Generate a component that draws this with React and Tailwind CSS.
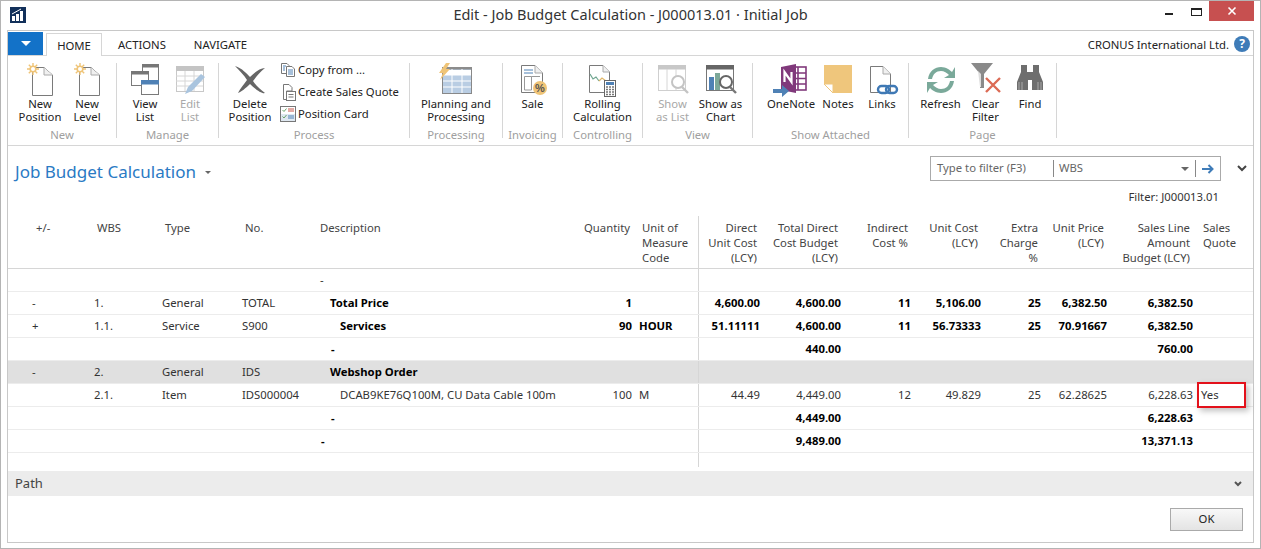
import React from "react";

const gray = "#7a7a7a";

const Doc = ({ children }) => (
  <svg width="34" height="34" viewBox="0 0 34 34" fill="none">
    <path d="M9.5 4.5H21L29.5 12V32.5H9.5Z" fill="#fff" stroke={gray} />
    <path d="M21 4.5V12H29.5" fill="#f0f0f0" stroke="#aaa" />
    {children}
  </svg>
);

const NewIcon = () => (
  <Doc>
    <path d="M10 0V12M4 6H16M5.8 1.8L14.2 10.2M14.2 1.8L5.8 10.2" stroke="#efc477" strokeWidth="1.4" />
    <circle cx="10" cy="6" r="3.6" fill="#efc477" />
    <circle cx="10" cy="6" r="2" fill="#fff" />
  </Doc>
);

const ViewListIcon = () => (
  <svg width="34" height="34" viewBox="0 0 34 34" fill="none">
    <rect x="14.5" y="1.5" width="16" height="16" fill="#fff" stroke={gray} />
    <rect x="14" y="1" width="17" height="3.5" fill="#777" />
    <rect x="3.5" y="8.5" width="17" height="14" fill="#fff" stroke={gray} />
    <rect x="3" y="8" width="18" height="3.5" fill="#777" />
    <rect x="13.5" y="17.5" width="17" height="14" fill="#fff" stroke={gray} />
    <rect x="13" y="17" width="18" height="4.5" fill="#4f81b5" />
  </svg>
);

const EditListIcon = () => (
  <svg width="34" height="34" viewBox="0 0 34 34" fill="none">
    <rect x="3.5" y="3.5" width="27" height="25" fill="#fff" stroke="#c8c8c8" />
    <rect x="3" y="3" width="28" height="5" fill="#c4c4c4" />
    <path d="M3 13H30M3 18H30M3 23H30M12 8V28M21 8V28" stroke="#d6d6d6" />
    <path d="M12 31L15 24L28 11L32 14L19 28Z" fill="#a9c4de" />
  </svg>
);

const DeleteIcon = () => (
  <svg width="36" height="34" viewBox="0 0 36 34" fill="none">
    <path d="M3 3C10 5 15 11 18 14C23 9 28 5 33 5C28 9 24 14 21 18C24 23 29 27 33 30C30 31 23 26 18 21C14 25 9 29 6 30C8 26 12 21 15 17C12 12 7 7 3 3Z" fill="#666" />
  </svg>
);

const SmallDocs = () => (
  <svg width="16" height="16" viewBox="0 0 16 16" fill="none">
    <path d="M1.5 1.5H7L9 3.5V11.5H1.5Z" fill="#fff" stroke="#777" />
    <path d="M6.5 4.5H12L14.5 7V14.5H6.5Z" fill="#fff" stroke="#777" />
    <path d="M3 4H6M3 6H5M3 8H5" stroke="#4f81b5" />
    <path d="M8 8H13M8 10H13M8 12H13" stroke="#4f81b5" />
  </svg>
);

const SmallQuote = () => (
  <svg width="16" height="17" viewBox="0 0 16 17" fill="none">
    <path d="M3.5 .5H9L12 3.5V7H6.5V15.5H3.5Z" fill="#fff" stroke="#777" />
    <rect x="6.5" y="7.5" width="9" height="9" fill="#fff" stroke="#777" />
    <path d="M8.5 10.5H13.5M8.5 13H13.5" stroke="#777" />
  </svg>
);

const SmallCard = () => (
  <svg width="16" height="16" viewBox="0 0 16 16" fill="none">
    <rect x=".5" y=".5" width="15" height="15" fill="#fff" stroke="#777" />
    <rect x="1" y="8" width="14" height="7" fill="#dfe8f1" />
    <path d="M2.5 4L4 5.5L6.5 2.5M2.5 10.5L4 12L6.5 9" stroke="#6aa56a" />
    <path d="M8 3H14M8 5H14" stroke="#c9574a" />
    <path d="M8 10H14M8 12H14" stroke="#4f81b5" />
  </svg>
);

const PlanningIcon = () => (
  <svg width="34" height="34" viewBox="0 0 34 34" fill="none">
    <rect x="3.5" y="4.5" width="29" height="26" fill="#b9cde3" stroke="#888" />
    <rect x="4" y="7" width="28" height="5" fill="#fff" />
    <rect x="3" y="4" width="30" height="2.5" fill="#8c8c8c" />
    <path d="M4 12H32M4 18H32M4 24H32M13 6V30M23 6V30" stroke="#fff" />
    <path d="M7 0L0 10H4L1 17L11 6H7L11 0Z" fill="#efc477" />
  </svg>
);

const SaleIcon = () => (
  <svg width="34" height="34" viewBox="0 0 34 34" fill="none">
    <path d="M5.5 2.5H19L26.5 10V29.5H5.5Z" fill="#fff" stroke={gray} />
    <path d="M19 2.5V10H26.5" fill="#f0f0f0" stroke="#aaa" />
    <path d="M8 7H17M8 10H17" stroke="#4f81b5" />
    <path d="M8.5 13.5H15.5V27H8.5Z" stroke="#999" />
    <path d="M15.5 13.5H24" stroke="#999" />
    <circle cx="24" cy="25" r="7" fill="#efc477" />
    <text x="24" y="29" textAnchor="middle" fontSize="11" fontWeight="700" fill="#555" fontFamily="Liberation Sans, sans-serif">%</text>
  </svg>
);

const RollingIcon = () => (
  <svg width="36" height="34" viewBox="0 0 36 34" fill="none">
    <path d="M4.5 2.5H18L24.5 9V29.5H4.5Z" fill="#fff" stroke={gray} />
    <path d="M18 2.5V9H24.5" fill="#f0f0f0" stroke="#aaa" />
    <path d="M5 11L8 16L11 14L14 18" stroke="#6ea58f" strokeWidth="1.2" />
    <path d="M14 18L17 15L21 18" stroke="#e0b768" strokeWidth="1.2" />
    <rect x="19.5" y="17.5" width="11" height="16" fill="#fff" stroke="#666" />
    <rect x="21" y="19" width="8" height="3" fill="#4f81b5" />
    <path d="M21 24H29M21 26.5H29M21 29H29M21 31.5H29" stroke="#777" strokeDasharray="2 1" strokeWidth="1.4" />
  </svg>
);

const ShowListIcon = () => (
  <svg width="34" height="34" viewBox="0 0 34 34" fill="none">
    <rect x="2.5" y="2.5" width="27" height="25" fill="#fff" stroke="#cfcfcf" />
    <rect x="2" y="2" width="28" height="4.5" fill="#c8c8c8" />
    <path d="M11 6V27M20 6V27" stroke="#d6d6d6" />
    <circle cx="22" cy="19" r="6" fill="#fff" stroke="#c4c4c4" strokeWidth="2" />
    <path d="M26 24L32 30" stroke="#c4c4c4" strokeWidth="2.4" />
  </svg>
);

const ShowChartIcon = () => (
  <svg width="34" height="34" viewBox="0 0 34 34" fill="none">
    <rect x="2.5" y="2.5" width="27" height="25" fill="#fff" stroke="#777" />
    <rect x="2" y="2" width="28" height="4.5" fill="#666" />
    <rect x="5" y="14" width="5" height="13" fill="#4f81b5" />
    <rect x="11" y="10" width="5" height="17" fill="#7da899" />
    <circle cx="22" cy="19" r="6" fill="#fff" stroke="#666" strokeWidth="2" />
    <path d="M26 24L32 30" stroke="#777" strokeWidth="2.4" />
  </svg>
);

const OneNoteIcon = () => (
  <svg width="36" height="34" viewBox="0 0 36 34" fill="none">
    <rect x="21" y="4" width="12" height="23" fill="#fff" stroke="#80397b" strokeWidth="1.6" />
    <path d="M25 4V27M21 10H33M21 15.5H33M21 21H33" stroke="#80397b" strokeWidth="1.6" />
    <path d="M8 4L23 1V30L8 27Z" fill="#80397b" />
    <path d="M11.5 19V9L18.5 19V9" stroke="#fff" strokeWidth="2.2" />
    <path d="M0 26H9V22L16 28L9 34V30H0Z" fill="#4f81b5" />
  </svg>
);

const NotesIcon = () => (
  <svg width="34" height="34" viewBox="0 0 34 34" fill="none">
    <path d="M3 2H31V30H12L3 21Z" fill="#efc67c" />
    <path d="M3 21H12V30Z" fill="#fff" stroke="#efc67c" />
  </svg>
);

const LinksIcon = () => (
  <svg width="34" height="34" viewBox="0 0 34 34" fill="none">
    <path d="M5.5 3.5H18L25.5 11V29.5H5.5Z" fill="#fff" stroke={gray} />
    <path d="M18 3.5V11H25.5" fill="#f0f0f0" stroke="#aaa" />
    <rect x="13" y="23" width="11" height="7" rx="3.5" fill="#fff" stroke="#3f79b5" strokeWidth="2.4" />
    <rect x="21" y="23" width="11" height="7" rx="3.5" fill="none" stroke="#3f79b5" strokeWidth="2.4" />
  </svg>
);

const RefreshIcon = () => (
  <svg width="34" height="34" viewBox="0 0 34 34" fill="none">
    <path d="M4 16C5 8 11 4 17 4C22 4 26 7 28 9L31 4V15H20L25 12C23 10 20 8 17 8C12 8 9 11 8 16Z" fill="#7aa99a" />
    <path d="M30 18C29 26 23 30 17 30C12 30 8 27 6 25L3 30V19H14L9 22C11 24 14 26 17 26C22 26 25 23 26 18Z" fill="#7aa99a" />
  </svg>
);

const ClearFilterIcon = () => (
  <svg width="34" height="34" viewBox="0 0 34 34" fill="none">
    <path d="M2 0H24L15 11V25H11V11Z" fill="#8a8a8a" />
    <path d="M9 8L12 11V24H11Z" fill="#ddd" />
    <path d="M17 15L31 29M31 15L17 29" stroke="#dc6b55" strokeWidth="2.4" />
  </svg>
);

const FindIcon = () => (
  <svg width="34" height="34" viewBox="0 0 34 34" fill="none">
    <path d="M8 2H14V9H20V2H26V9L30 19V27H19V17H15V27H4V19L8 9Z" fill="#6e6e6e" />
    <path d="M6 19V27M9 19V27M25 19V27M28 19V27" stroke="#aaa" />
  </svg>
);

const BigButton = ({ icon, lines, width, disabled }) => (
  <div className={`flex flex-col items-center ${width}`}>
    <div className="flex h-[34px] w-full items-center justify-center">{icon}</div>
    <div className={`whitespace-nowrap text-center leading-[13px] ${disabled ? "text-[#a8a8a8]" : "text-[#222]"}`}>
      {lines.map((l) => (
        <div key={l}>{l}</div>
      ))}
    </div>
  </div>
);

const Group = ({ label, width, inner = "", children }) => (
  <div className={`flex h-[75px] shrink-0 flex-col border-r border-[#d6d6d6] ${width}`}>
    <div className={`flex flex-1 justify-center ${inner}`}>{children}</div>
    <div className="-mb-[3px] whitespace-nowrap text-center leading-[13px] text-[#a0a0a0]">{label}</div>
  </div>
);

const Ribbon = () => (
  <div className="flex h-[91px] items-start border-y border-[#d6d6d6] pt-[7px]">
    <Group label="New" width="w-[109px]" inner="pl-[2px]">
      <BigButton icon={<NewIcon />} lines={["New", "Position"]} width="w-[48px]" />
      <BigButton icon={<NewIcon />} lines={["New", "Level"]} width="w-[46px]" />
    </Group>
    <Group label="Manage" width="w-[102px]">
      <BigButton icon={<ViewListIcon />} lines={["View", "List"]} width="w-[45px]" />
      <BigButton icon={<EditListIcon />} lines={["Edit", "List"]} width="w-[45px]" disabled />
    </Group>
    <Group label="Process" width="w-[191px]" inner="pr-[4px]">
      <BigButton icon={<DeleteIcon />} lines={["Delete", "Position"]} width="w-[56px]" />
      <div className="-mt-[2px] ml-[2px] flex w-[122px] flex-col gap-[4px] text-[#222]">
        <div className="flex h-[18px] items-center gap-[2px]"><SmallDocs />Copy from ...</div>
        <div className="flex h-[18px] items-center gap-[2px]"><SmallQuote />Create Sales Quote</div>
        <div className="flex h-[18px] items-center gap-[2px]"><SmallCard />Position Card</div>
      </div>
    </Group>
    <Group label="Processing" width="w-[93px]">
      <BigButton icon={<PlanningIcon />} lines={["Planning and", "Processing"]} width="w-[80px]" />
    </Group>
    <Group label="Invoicing" width="w-[60px]">
      <BigButton icon={<SaleIcon />} lines={["Sale"]} width="w-[50px]" />
    </Group>
    <Group label="Controlling" width="w-[80px]">
      <BigButton icon={<RollingIcon />} lines={["Rolling", "Calculation"]} width="w-[70px]" />
    </Group>
    <Group label="View" width="w-[110px]" inner="pr-[2px]">
      <BigButton icon={<ShowListIcon />} lines={["Show", "as List"]} width="w-[48px]" disabled />
      <BigButton icon={<ShowChartIcon />} lines={["Show as", "Chart"]} width="w-[48px]" />
    </Group>
    <Group label="Show Attached" width="w-[156px]" inner="pl-[9px]">
      <BigButton icon={<OneNoteIcon />} lines={["OneNote"]} width="w-[50px]" />
      <BigButton icon={<NotesIcon />} lines={["Notes"]} width="w-[44px]" />
      <BigButton icon={<LinksIcon />} lines={["Links"]} width="w-[44px]" />
    </Group>
    <Group label="Page" width="w-[148px]" inner="pl-[5px]">
      <BigButton icon={<RefreshIcon />} lines={["Refresh"]} width="w-[46px]" />
      <BigButton icon={<ClearFilterIcon />} lines={["Clear", "Filter"]} width="w-[44px]" />
      <BigButton icon={<FindIcon />} lines={["Find"]} width="w-[45px]" />
    </Group>
  </div>
);

const cols =
  "grid grid-cols-[83px_68px_80px_78px_258px_60px_63px_65px_81px_70px_70px_60px_66px_86px_57px]";

const Header = () => (
  <div className={`${cols} h-[53px] border-b border-[#d6d6d6] pt-[4px] leading-[15px] text-[#444]`}>
    <div className="pl-[28px]">+/-</div>
    <div className="pl-[6px]">WBS</div>
    <div className="pl-[6px]">Type</div>
    <div className="pl-[6px]">No.</div>
    <div className="pl-[3px]">Description</div>
    <div className="pr-[5px] text-right">Quantity</div>
    <div className="pl-[7px]">Unit of<br />Measure<br />Code</div>
    <div className="-mt-[4px] border-l border-[#d6d6d6] pr-[6px] pt-[4px] text-right">Direct<br />Unit Cost<br />(LCY)</div>
    <div className="pr-[6px] text-right">Total Direct<br />Cost Budget<br />(LCY)</div>
    <div className="pr-[6px] text-right">Indirect<br />Cost %</div>
    <div className="pr-[6px] text-right">Unit Cost<br />(LCY)</div>
    <div className="pr-[6px] text-right">Extra<br />Charge<br />%</div>
    <div className="pr-[6px] text-right">Unit Price<br />(LCY)</div>
    <div className="pr-[6px] text-right">Sales Line<br />Amount<br />Budget (LCY)</div>
    <div className="pl-[7px]">Sales<br />Quote</div>
  </div>
);

const rows = [
  { desc: "-" },
  { bold: true, pm: "-", wbs: "1.", type: "General", no: "TOTAL", desc: "Total Price", indent: "pl-[13px]", qty: "1", duc: "4,600.00", tdc: "4,600.00", ind: "11", uc: "5,106.00", ec: "25", up: "6,382.50", sl: "6,382.50" },
  { bold: true, pm: "+", wbs: "1.1.", type: "Service", no: "S900", desc: "Services", indent: "pl-[23px]", qty: "90", uom: "HOUR", duc: "51.11111", tdc: "4,600.00", ind: "11", uc: "56.73333", ec: "25", up: "70.91667", sl: "6,382.50" },
  { bold: true, desc: "-", indent: "pl-[14px]", tdc: "440.00", sl: "760.00" },
  { bold: true, shaded: true, pm: "-", wbs: "2.", type: "General", no: "IDS", desc: "Webshop Order", indent: "pl-[13px]" },
  { wbs: "2.1.", type: "Item", no: "IDS000004", desc: "DCAB9KE76Q100M, CU Data Cable 100m", indent: "pl-[23px]", qty: "100", uom: "M", duc: "44.49", tdc: "4,449.00", ind: "12", uc: "49.829", ec: "25", up: "62.28625", sl: "6,228.63", sq: "Yes" },
  { bold: true, desc: "-", indent: "pl-[14px]", tdc: "4,449.00", sl: "6,228.63" },
  { bold: true, desc: "-", indent: "pl-[4px]", tdc: "9,489.00", sl: "13,371.13" },
];

const Row = ({ r }) => {
  const strong = r.bold ? "font-bold text-black" : "text-[#333]";
  const plain = "text-[#333]";
  return (
    <div className={`${cols} h-[23px] items-stretch border-b border-[#ececec] leading-[21px] ${r.shaded ? "bg-[#e0e0e0]" : ""}`}>
      <div className={`pl-[24px] ${plain}`}>{r.pm}</div>
      <div className={`pl-[3px] ${plain}`}>{r.wbs}</div>
      <div className={`pl-[3px] ${plain}`}>{r.type}</div>
      <div className={`pl-[3px] ${plain}`}>{r.no}</div>
      <div className={`whitespace-nowrap ${r.indent || "pl-[3px]"} ${strong}`}>{r.desc}</div>
      <div className={`pr-[3px] text-right ${strong}`}>{r.qty}</div>
      <div className={`pl-[4px] ${strong}`}>{r.uom}</div>
      <div className={`border-l border-[#d6d6d6] pr-[3px] text-right ${strong}`}>{r.duc}</div>
      <div className={`pr-[3px] text-right ${strong}`}>{r.tdc}</div>
      <div className={`pr-[3px] text-right ${strong}`}>{r.ind}</div>
      <div className={`pr-[3px] text-right ${strong}`}>{r.uc}</div>
      <div className={`pr-[3px] text-right ${strong}`}>{r.ec}</div>
      <div className={`pr-[3px] text-right ${strong}`}>{r.up}</div>
      <div className={`pr-[3px] text-right ${strong}`}>{r.sl}</div>
      <div className={`pl-[5px] ${plain}`}>{r.sq}</div>
    </div>
  );
};

export default function App() {
  return (
    <div
      className="relative flex h-[549px] w-[1261px] flex-col overflow-hidden border border-[#b4b4b4] bg-white text-[11.3px]"
      style={{ fontFamily: '"Noto Sans", sans-serif' }}
    >
      <div className="grid h-[29px] shrink-0 grid-cols-[1fr_auto_1fr]">
        <div className="pl-[9px] pt-[6px]">
          <svg width="16" height="16" viewBox="0 0 16 16">
            <rect width="16" height="16" fill="#12305a" />
            <path d="M2 14V9H5V14ZM6 14V7H9V14ZM10 14V4H13V14Z" fill="#fff" />
            <path d="M2 7L11 2" stroke="#fff" />
          </svg>
        </div>
        <div className="pt-[3px] text-[14.5px] leading-[20px] text-[#333]">
          Edit - Job Budget Calculation - J000013.01 · Initial Job
        </div>
        <div className="flex items-start justify-end pr-[6px]">
          <div className="mr-[18px] mt-[12px] h-[2px] w-[8px] bg-[#222]" />
          <div className="mr-[7px] mt-[7px] h-[8px] w-[11px] border border-t-2 border-[#222]" />
          <div className="flex h-[20px] w-[45px] items-center justify-center bg-[#c75050]">
            <svg width="10" height="10" viewBox="0 0 10 10">
              <path d="M1.5 1.5L8.5 8.5M8.5 1.5L1.5 8.5" stroke="#fff" strokeWidth="1.6" />
            </svg>
          </div>
        </div>
      </div>

      <div className="mx-[6px] mb-[5px] flex min-h-0 flex-1 flex-col border border-[#c8c8c8]">
        <div className="flex h-[24px] shrink-0 items-end">
          <div className="flex h-[23px] w-[35px] items-center justify-center bg-[#1372c8]">
            <div className="h-0 w-0 border-x-[5px] border-t-[5px] border-x-transparent border-t-white" />
          </div>
          <div className="relative top-px ml-[3px] flex h-[23px] w-[56px] items-center justify-center border-x border-t border-[#d6d6d6] bg-white pt-[2px] text-[#222]">HOME</div>
          <div className="ml-[16px] flex h-[23px] items-center pt-[3px] text-[#222]">ACTIONS</div>
          <div className="ml-[28px] flex h-[23px] items-center pt-[3px] text-[#222]">NAVIGATE</div>
          <div className="ml-auto flex h-[23px] items-center gap-[5px] pr-[3px] text-[#222]">
            <span className="pt-[3px]">CRONUS International Ltd.</span>
            <div className="flex h-[16px] w-[16px] items-center justify-center rounded-full bg-[#3f7cb8] text-[12px] font-bold leading-none text-white">?</div>
          </div>
        </div>

        <Ribbon />

        <div className="relative h-[70px] shrink-0">
          <div className="flex items-center pl-[7px] pt-[14px]">
            <span className="text-[17px] leading-[24px] text-[#2a7ac4]">Job Budget Calculation</span>
            <span className="ml-[9px] h-0 w-0 border-x-[3px] border-t-[3px] border-x-transparent border-t-[#666]" />
          </div>
          <div className="absolute left-[922px] top-[10px] flex h-[25px] w-[291px] items-center border border-[#aaa]">
            <span className="w-[123px] border-r border-[#888] pb-[2px] pl-[6px] leading-[15px] text-[#666]">Type to filter (F3)</span>
            <span className="flex-1 pl-[5px] text-[#666]">WBS</span>
            <span className="mr-[6px] h-0 w-0 border-x-[4px] border-t-[4px] border-x-transparent border-t-[#666]" />
            <span className="flex h-[17px] w-[25px] items-center justify-center border-l border-[#888]">
              <svg width="12" height="10" viewBox="0 0 12 10">
                <path d="M0 5H10M6.5 1L10.5 5L6.5 9" stroke="#3f7cb8" strokeWidth="2" fill="none" />
              </svg>
            </span>
          </div>
          <svg className="absolute left-[1229px] top-[19px]" width="10" height="7" viewBox="0 0 10 7">
            <path d="M1 1L5 5L9 1" stroke="#444" strokeWidth="2" fill="none" />
          </svg>
          <div className="absolute right-[34px] top-[42px] leading-[17px] text-[#333]">Filter: J000013.01</div>
        </div>

        <Header />
        {rows.map((r, i) => (
          <Row key={i} r={r} />
        ))}
        <div className={`${cols} h-[14px]`}>
          <div className="col-start-8 border-l border-[#d6d6d6]" />
        </div>
        <div className="mt-[4px] flex h-[25px] shrink-0 items-center justify-between bg-[#ececec] pl-[7px] pr-[11px] pt-[1px] text-[13px] text-[#444]">
          Path
          <svg width="8" height="6" viewBox="0 0 8 6">
            <path d="M1 1L4 4L7 1" stroke="#555" strokeWidth="2" fill="none" />
          </svg>
        </div>
        <div className="flex flex-1 items-center justify-end pr-[10px]">
          <div className="flex h-[23px] w-[73px] items-center justify-center border border-[#aaa] bg-gradient-to-b from-[#f8f8f8] to-[#e4e4e4] text-[#222]">OK</div>
        </div>
      </div>

      <div className="absolute left-[1196px] top-[381px] h-[26px] w-[49px] border-2 border-[#e3111b] shadow-[3px_3px_6px_rgba(0,0,0,0.25)]" />
    </div>
  );
}
